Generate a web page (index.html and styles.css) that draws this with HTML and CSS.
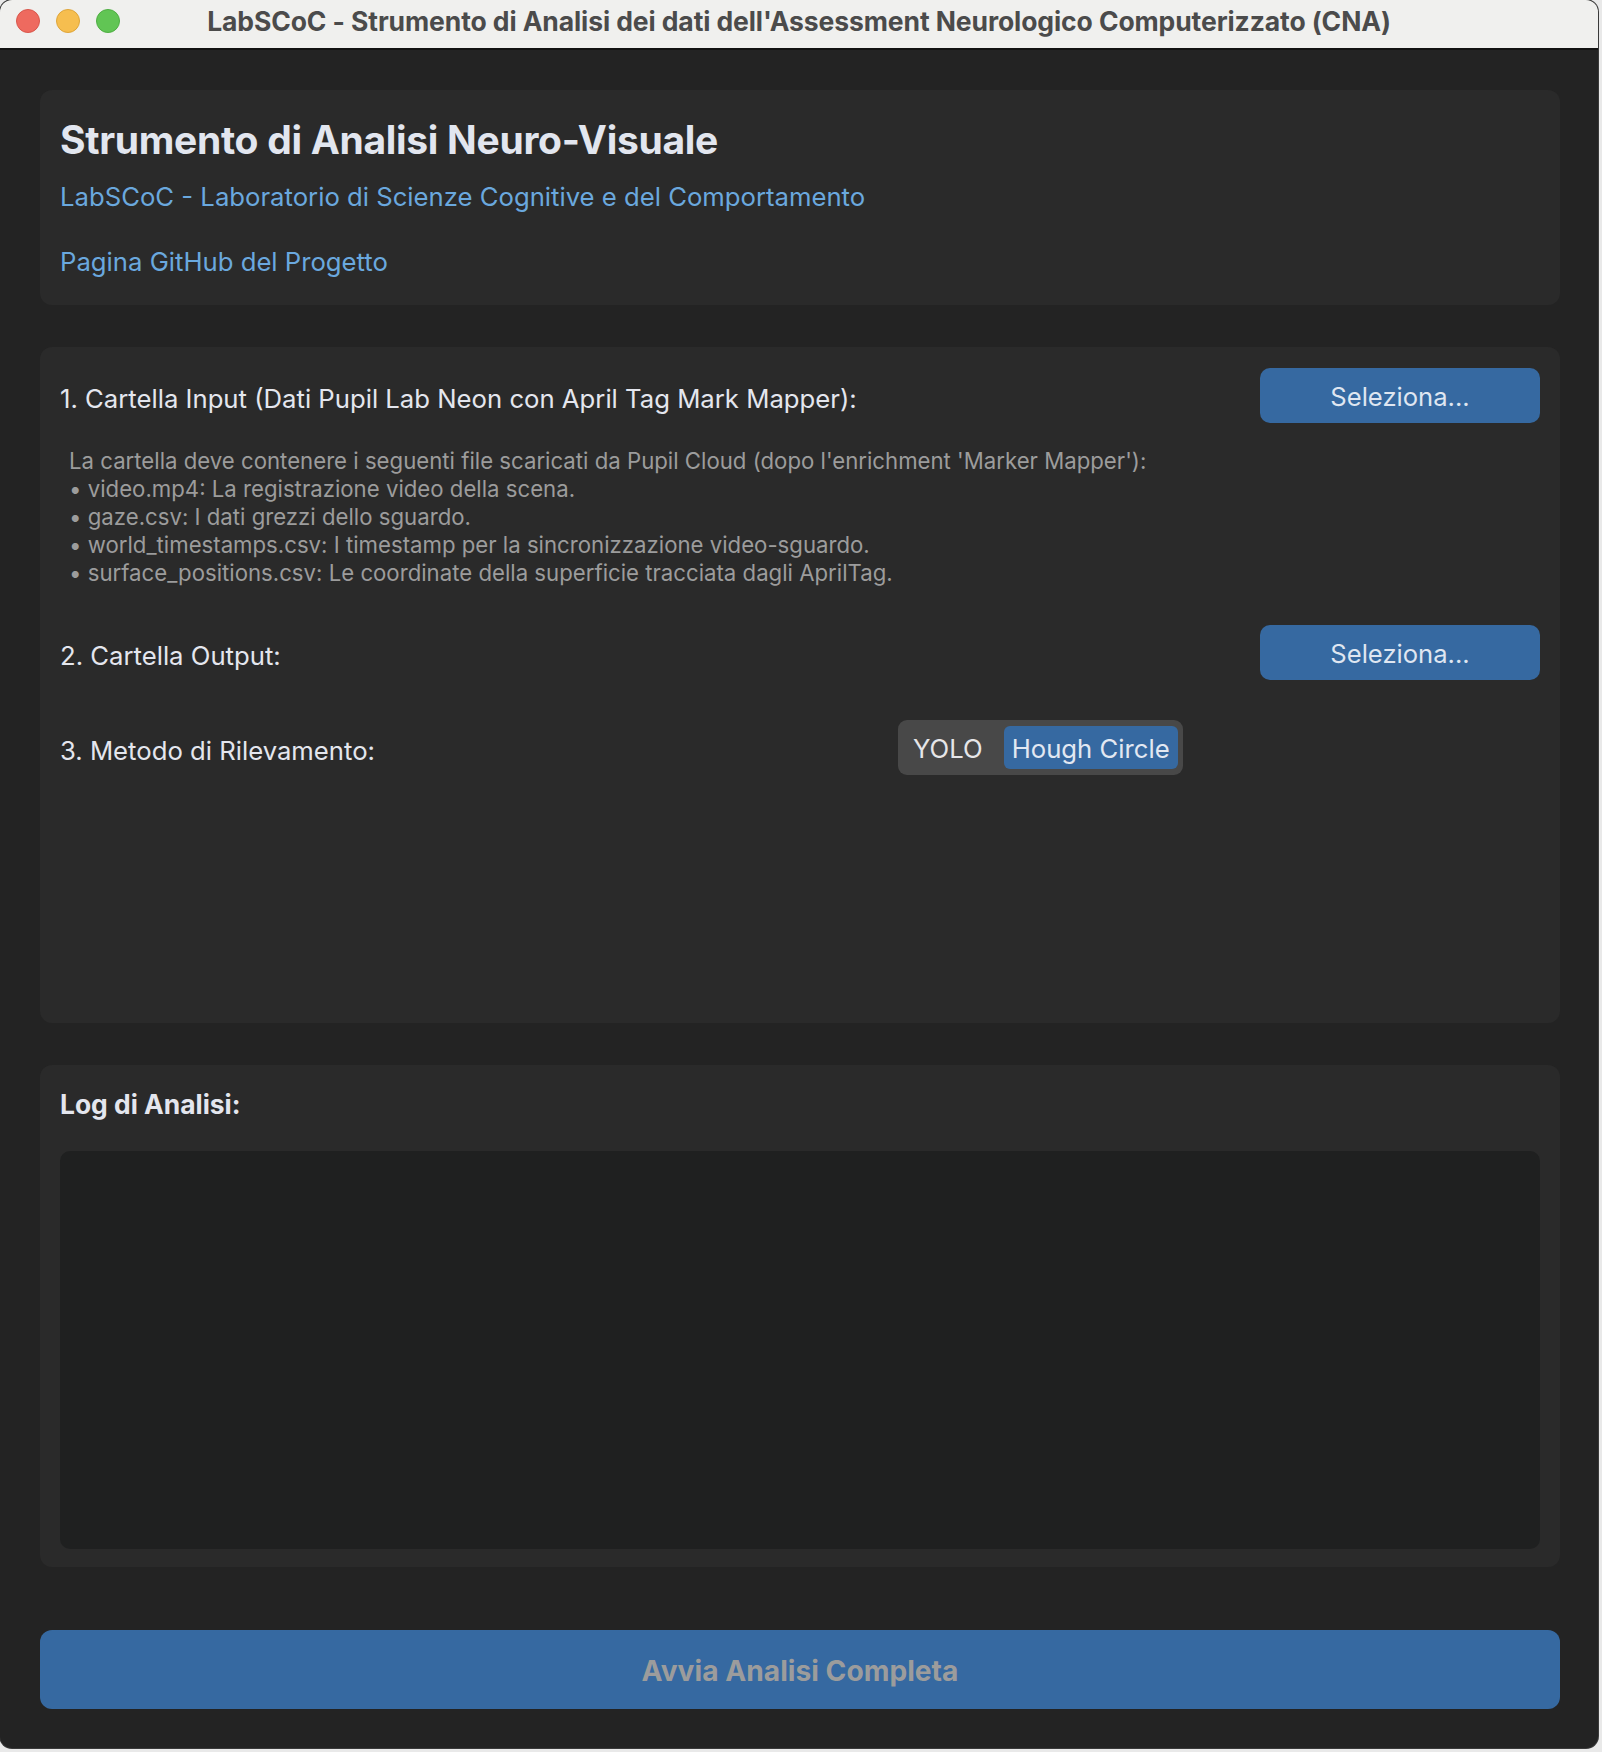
FILE: index.html
```html
<!DOCTYPE html>
<html lang="it">
<head>
<meta charset="utf-8">
<title>LabSCoC</title>
<link rel="stylesheet" href="styles.css">
</head>
<body>
<div class="window">
  <div class="titlebar">
    <div class="lights">
      <span class="light red"></span>
      <span class="light yellow"></span>
      <span class="light green"></span>
    </div>
    <div class="wtitle">LabSCoC - Strumento di Analisi dei dati dell'Assessment Neurologico Computerizzato (CNA)</div>
  </div>
  <div class="content">
    <section class="card header">
      <h1 class="title">Strumento di Analisi Neuro-Visuale</h1>
      <a class="link sub">LabSCoC - Laboratorio di Scienze Cognitive e del Comportamento</a>
      <a class="link gh">Pagina GitHub del Progetto</a>
    </section>
    <section class="card settings">
      <div class="row">
        <span class="label">1. Cartella Input (Dati Pupil Lab Neon con April Tag Mark Mapper):</span>
        <button class="btn">Seleziona...</button>
      </div>
      <div class="desc">
        <div>La cartella deve contenere i seguenti file scaricati da Pupil Cloud (dopo l'enrichment 'Marker Mapper'):</div>
        <div>• video.mp4: La registrazione video della scena.</div>
        <div>• gaze.csv: I dati grezzi dello sguardo.</div>
        <div>• world_timestamps.csv: I timestamp per la sincronizzazione video-sguardo.</div>
        <div>• surface_positions.csv: Le coordinate della superficie tracciata dagli AprilTag.</div>
      </div>
      <div class="row row2">
        <span class="label">2. Cartella Output:</span>
        <button class="btn">Seleziona...</button>
      </div>
      <div class="row row3">
        <span class="label">3. Metodo di Rilevamento:</span>
        <div class="seg">
          <span class="seg-item">YOLO</span>
          <span class="seg-item active">Hough Circle</span>
        </div>
      </div>
    </section>
    <section class="card log">
      <div class="log-label">Log di Analisi:</div>
      <div class="log-box"></div>
    </section>
    <button class="start">Avvia Analisi Completa</button>
  </div>
</div>
</body>
</html>
```
FILE: styles.css
```css
* { box-sizing: border-box; }
html, body { margin: 0; padding: 0; }
body {
  background: #e9e9e9;
  font-family: Inter, "Noto Sans", "DejaVu Sans", sans-serif;
  width: 1602px;
  height: 1752px;
  overflow: hidden;
}
.window {
  width: 1598px;
  height: 1748px;
  background: #232323;
  border-radius: 12px;
  overflow: hidden;
  display: flex;
  flex-direction: column;
  box-shadow: 0 0 0 1px #3a3a3a;
}
.titlebar {
  height: 50px;
  flex: none;
  background: #f0f0ee;
  border-bottom: 2px solid #121212;
  display: flex;
  align-items: center;
  position: relative;
}
.lights {
  display: flex;
  gap: 16px;
  padding-left: 16px;
  margin-top: -6px;
}
.light {
  width: 24px;
  height: 24px;
  border-radius: 50%;
  display: block;
}
.red { background: #ee6a5f; border: 1px solid #d8574c; }
.yellow { background: #f6be4f; border: 1px solid #dea53a; }
.green { background: #61c554; border: 1px solid #4fae43; }
.wtitle {
  position: absolute;
  left: 0;
  right: 0;
  top: 4px;
  text-align: center;
  font-size: 26.5px;
  font-weight: 700;
  color: #4b4b4b;
  letter-spacing: -0.1px;
  line-height: 34px;
}
.content {
  flex: 1;
  padding: 40px 38px 39px 40px;
  display: flex;
  flex-direction: column;
}
.card {
  background: #2a2a2a;
  border-radius: 12px;
  padding: 20px;
}
.header {
  height: 215px;
  padding-top: 20px;
  display: flex;
  flex-direction: column;
}
.title {
  margin: 0;
  font-size: 39px;
  line-height: 60px;
  font-weight: 700;
  color: #e2e6ef;
  letter-spacing: -0.3px;
}
.link {
  color: #6aa8de;
  font-size: 25.7px;
  line-height: 34px;
}
.sub { margin-top: 10px; }
.gh { margin-top: 31px; }
.settings {
  margin-top: 42px;
  height: 676px;
  padding-top: 21px;
}
.row {
  display: grid;
  grid-template-columns: 838px 1fr;
  align-items: center;
}
.label {
  font-size: 25.7px;
  color: #e4e6ee;
  white-space: nowrap;
  padding-top: 5px;
}
.btn {
  justify-self: end;
  width: 280px;
  height: 55px;
  border: none;
  border-radius: 10px;
  background: #3669a1;
  color: #dfe6f1;
  font-family: inherit;
  font-size: 25.6px;
  padding-top: 3px;
}
.desc {
  margin-top: 24px;
  padding-left: 9px;
  font-size: 22.2px;
  line-height: 28px;
  color: #9c9c9c;
}
.row2 { margin-top: 38px; }
.row3 { margin-top: 40px; }
.seg {
  justify-self: start;
  display: flex;
  align-items: center;
  height: 55px;
  padding: 0 5px 0 15px;
  background: #484848;
  border-radius: 9px;
}
.seg-item {
  font-size: 25.7px;
  color: #e6e6e8;
  line-height: 45px;
  height: 43px;
}
.seg-item.active {
  background: #3669a1;
  border-radius: 6px;
  padding: 0 8px;
  color: #e2e8f2;
  margin-left: 21px;
}
.log {
  margin-top: 42px;
  height: 502px;
  padding: 20px 20px 18px;
  display: flex;
  flex-direction: column;
}
.log-label {
  font-size: 26.4px;
  font-weight: 700;
  color: #e4e6ee;
  line-height: 38px;
}
.log-box {
  margin-top: 28px;
  flex: 1;
  background: #1f2020;
  border-radius: 10px;
}
.start {
  margin-top: 63px;
  height: 79px;
  border: none;
  border-radius: 12px;
  background: #3669a1;
  color: #9c9c9c;
  font-family: inherit;
  font-size: 28.2px;
  font-weight: 700;
  padding-top: 4px;
}
```
